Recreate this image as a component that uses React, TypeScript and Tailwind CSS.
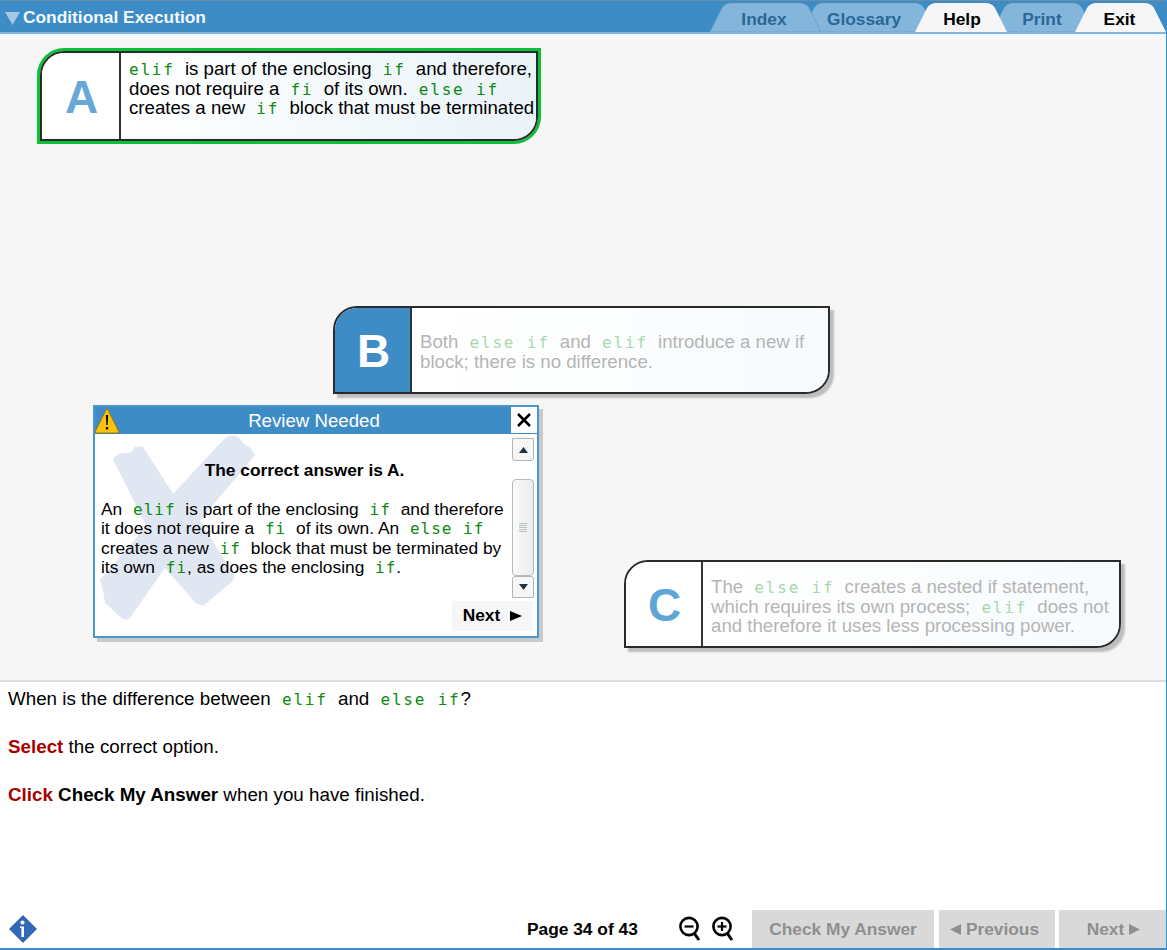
import type { ReactNode } from "react";

const TABS = [
	{ label: "Index", width: 111, left: 0, active: false, z: "z-10", pad: "pr-[3px]" },
	{ label: "Glossary", width: 134, left: -19, active: false, z: "z-0", pad: "pr-[10px]" },
	{ label: "Help", width: 92, left: -21, active: true, z: "z-20", pad: "pl-[2px]" },
	{ label: "Print", width: 102, left: -15, active: false, z: "z-0", pad: "pr-[2px]" },
	{ label: "Exit", width: 91, left: -19, active: true, z: "z-20", pad: "pr-[2px]" },
];

// flush: starts a line, tight: punctuation follows straight after, small: dialog text
function Code({
	children,
	faded,
	flush,
	tight,
	small,
}: {
	children: ReactNode;
	faded?: boolean;
	flush?: boolean;
	tight?: boolean;
	small?: boolean;
}) {
	return (
		<code
			className={`font-['DejaVu_Sans_Mono',monospace] text-[16px] leading-none ${
				small ? "tracking-[1px]" : "tracking-[1.8px]"
			} ${flush ? "ml-0" : "ml-[6px]"} ${tight ? "mr-0" : "mr-[5px]"} ${
				faded ? "text-[#a9d8ad]" : "text-[#0d8a12]"
			}`}
		>
			{children}
		</code>
	);
}

function Tab({ label, width, left, active, z, pad }: (typeof TABS)[number]) {
	const w = width;
	return (
		<div
			className={`relative flex h-[30px] items-center justify-center pt-[6px] ${z} ${pad}`}
			style={{ width: w, marginLeft: left }}
		>
			<svg className="absolute inset-0" width={w} height={30} viewBox={`0 0 ${w} 30`}>
				<path
					d={`M0 30 L12 6 Q15 1 22 1 L${w - 22} 1 Q${w - 15} 1 ${w - 12} 6 L${w} 30 Z`}
					fill={active ? "#f6f6f6" : "#84b6db"}
					stroke={active ? "none" : "#5c9ccd"}
					strokeWidth="0.6"
				/>
			</svg>
			<span
				className={`relative text-[17.33px] font-bold ${active ? "text-black" : "text-[#2b6797]"}`}
			>
				{label}
			</span>
		</div>
	);
}

function OptionCard({
	letter,
	className,
	letterClass,
	bodyClass,
	children,
}: {
	letter: string;
	className: string;
	letterClass: string;
	bodyClass: string;
	children: ReactNode;
}) {
	return (
		<div
			className={`absolute flex overflow-hidden rounded-tl-[24px] rounded-br-[24px] border-2 border-[#2a2a2a] ${className}`}
		>
			<div
				className={`flex shrink-0 items-center justify-center border-r-2 border-[#333] pt-[2px] pl-[2px] text-[46px] font-bold ${letterClass}`}
			>
				{letter}
			</div>
			<div className={`flex-1 pl-2 text-[18.67px] leading-[19.6px] whitespace-nowrap ${bodyClass}`}>
				{children}
			</div>
		</div>
	);
}

function ReviewDialog() {
	return (
		<div className="absolute top-[371px] left-[93px] flex h-[233px] w-[446px] flex-col border-2 border-[#4d96cd] bg-white shadow-[4px_4px_0_#c9c9c9]">
			<div className="relative flex h-[27px] shrink-0 items-center justify-center bg-[#3d8cc6] pr-[4px] text-[18.67px] text-white">
				Review Needed
				<svg className="absolute top-[-1px] left-[-1px]" width="26" height="28" viewBox="0 0 26 28">
					<path d="M13 2 L25 26 Q25 27 24 27 L2 27 Q1 27 1 26 Z" fill="#fbc20e" stroke="#8a6a00" strokeWidth="0.8" />
					<path d="M11.8 9 H14.2 L13.7 19 H12.3 Z M11.8 21 H14.2 V23.5 H11.8 Z" fill="#111" />
				</svg>
				<div className="absolute top-0 right-0 flex h-[26px] w-[26px] items-center justify-center bg-white">
					<svg width="16" height="16" viewBox="0 0 16 16">
						<path d="M2 2 L14 14 M14 2 L2 14" stroke="#000" strokeWidth="2.6" />
					</svg>
				</div>
			</div>
			<div className="relative flex-1">
				<svg className="absolute top-[-34px] left-[-10px]" width="173" height="223" viewBox="0 0 520 670">
					<path
						d="M85 180 Q90 165 110 160 L140 158 L148 142 L172 138 L265 282 L420 115 Q440 100 462 112 L478 132 L495 142 L512 165 L345 362 L450 530 L440 548 L355 618 L335 612 L240 505 L135 655 Q125 665 110 655 L60 610 L55 575 L45 540 L185 380 Z"
						fill="#e1e6f3"
					/>
				</svg>
				<div className="relative flex h-full">
					<div className="w-[416px] pt-[27px] pl-[6px] text-[17.33px] leading-[19.6px] whitespace-nowrap text-black">
						<p className="pr-[3px] text-center font-bold">The correct answer is A.</p>
						<p className="mt-[19px]">
							An <Code small>elif</Code> is part of the enclosing <Code small>if</Code> and therefore
							<br />
							it does not require a <Code small>fi</Code> of its own. An <Code small>else if</Code>
							<br />
							creates a new <Code small>if</Code> block that must be terminated by
							<br />
							its own <Code small tight>fi</Code>, as does the enclosing <Code small tight>if</Code>.
						</p>
					</div>
					<Scrollbar />
				</div>
				<div className="absolute right-[4px] bottom-[5px] flex h-[30px] w-[81px] items-center justify-center gap-[10px] bg-[#f6f6f6] text-[17.33px] font-bold text-black">
					Next
					<svg width="12" height="12" viewBox="0 0 12 12">
						<path d="M0 1 L12 6 L0 11 Z" fill="#000" />
					</svg>
				</div>
			</div>
		</div>
	);
}

function Scrollbar() {
	return (
		<div className="mt-[4px] ml-[1px] flex h-[160px] w-[22px] flex-col">
			<div className="flex h-[23px] items-center justify-center rounded-b-[3px] border border-[#b5b5b5] bg-[#f6f6f6]">
				<svg width="9" height="6" viewBox="0 0 9 6">
					<path d="M4.5 0 L9 6 H0 Z" fill="#1f3347" />
				</svg>
			</div>
			<div className="mt-[18px] flex h-[97px] items-center justify-center rounded-[4px] border border-[#b9b9b9] bg-gradient-to-r from-[#fafafa] to-[#ececec]">
				<div className="flex w-[8px] flex-col gap-[1px]">
					<div className="h-px bg-[#b5c3c3]" />
					<div className="h-px bg-[#b5c3c3]" />
					<div className="h-px bg-[#b5c3c3]" />
					<div className="h-px bg-[#b5c3c3]" />
					<div className="h-px bg-[#b5c3c3]" />
				</div>
			</div>
			<div className="mt-auto flex h-[22px] items-center justify-center rounded-t-[3px] border border-[#b5b5b5] bg-[#f6f6f6]">
				<svg width="9" height="6" viewBox="0 0 9 6">
					<path d="M0 0 H9 L4.5 6 Z" fill="#1f3347" />
				</svg>
			</div>
		</div>
	);
}

function ZoomIcon({ plus }: { plus?: boolean }) {
	return (
		<svg width="24" height="26" viewBox="0 0 24 26">
			<circle cx="11" cy="10.5" r="8.6" fill="none" stroke="#000" strokeWidth="2.6" />
			<path d="M16 17 L21 24" stroke="#000" strokeWidth="3" />
			<path d="M6.5 10.5 H15.5" stroke="#000" strokeWidth="2.2" />
			{plus && <path d="M11 6 V15" stroke="#000" strokeWidth="2.2" />}
		</svg>
	);
}

export default function App() {
	return (
		<div className="flex h-[950px] w-[1167px] flex-col overflow-hidden border-r border-b-2 border-[#3d8cc6] bg-white font-['Liberation_Sans',Arial,sans-serif] text-[18.8px] text-black">
			<header className="flex h-[34px] shrink-0 border-t border-b-2 border-t-[#6a8ea8] border-b-[#7db3dc] bg-[#3d8cc6]">
				<div className="flex flex-1 items-center gap-[3px] pt-[3px] pl-[5px] text-[17.33px] font-bold text-[#f4f8fb]">
					<svg width="15" height="13" viewBox="0 0 15 13">
						<path d="M0 0 H15 L7.5 13 Z" fill="#a3c9e6" />
					</svg>
					Conditional Execution
				</div>
				<nav className="mt-[1px] flex h-[30px] items-start">
					{TABS.map((t) => (
						<Tab key={t.label} {...t} />
					))}
				</nav>
			</header>

			<main className="relative h-[648px] shrink-0 border-b-2 border-[#dcdcdc] bg-[#f6f6f6]">
				<OptionCard
					letter="A"
					className="top-[17px] left-[40px] h-[90px] w-[498px] shadow-[0_0_0_3px_#0cc13a]"
					letterClass="w-[79px] bg-white text-[#68a8d6]"
					bodyClass="bg-gradient-to-r from-white to-[#eaf3f8] pt-[6px] text-black"
				>
					<Code flush>elif</Code> is part of the enclosing <Code>if</Code> and therefore,
					<br />
					does not require a <Code>fi</Code> of its own. <Code>else if</Code>
					<br />
					creates a new <Code>if</Code> block that must be terminated
				</OptionCard>
				<OptionCard
					letter="B"
					className="top-[272px] left-[333px] h-[88px] w-[497px] shadow-[4px_4px_2px_#bdbdbd]"
					letterClass="w-[77px] bg-[#3d8cc6] text-white"
					bodyClass="bg-gradient-to-r from-white to-[#f7fbfd] pt-[24px] text-[#b5b5b5]"
				>
					Both <Code faded>else if</Code> and <Code faded>elif</Code> introduce a new if
					<br />
					block; there is no difference.
				</OptionCard>
				<OptionCard
					letter="C"
					className="top-[526px] left-[624px] h-[88px] w-[497px] shadow-[4px_4px_2px_#bdbdbd]"
					letterClass="w-[77px] bg-white text-[#5ea6d6]"
					bodyClass="bg-gradient-to-r from-white to-[#f7fbfd] pt-[15px] text-[#b5b5b5]"
				>
					The <Code faded>else if</Code> creates a nested if statement,
					<br />
					which requires its own process; <Code faded>elif</Code> does not
					<br />
					and therefore it uses less processing power.
				</OptionCard>
				<ReviewDialog />
			</main>

			<section className="flex-1 pt-[5px] pl-[8px] leading-[24px]">
				<p>
					When is the difference between <Code>elif</Code> and <Code tight>else if</Code>?
				</p>
				<p className="mt-[24px]">
					<b className="text-[#a80000]">Select</b> the correct option.
				</p>
				<p className="mt-[24px]">
					<b className="text-[#a80000]">Click</b> <b>Check My Answer</b> when you have finished.
				</p>
			</section>

			<footer className="flex h-[38px] shrink-0 items-center pl-[9px] text-[17.33px] font-bold">
				<svg width="28" height="28" viewBox="0 0 28 28">
					<path d="M14 0 L28 14 L14 28 L0 14 Z" fill="#3267b7" />
					<circle cx="13.5" cy="7.5" r="2" fill="#fff" />
					<path d="M11 11.5 H15 V22 H12.4 V13 H11 Z" fill="#fff" />
				</svg>
				<span className="ml-[490px] w-[151px] pt-[1px]">Page 34 of 43</span>
				<ZoomIcon />
				<span className="w-[9px]" />
				<ZoomIcon plus />
				<div className="ml-[17px] flex h-full w-[182px] items-center justify-center bg-[#d9d9d9] pt-[1px] text-[#8f8f8f]">
					Check My Answer
				</div>
				<div className="ml-[5px] flex h-full w-[116px] items-center justify-center gap-[5px] bg-[#d9d9d9] pt-[1px] pr-[5px] text-[#8f8f8f]">
					<svg width="11" height="11" viewBox="0 0 11 11">
						<path d="M11 0 V11 L0 5.5 Z" fill="#8f8f8f" />
					</svg>
					Previous
				</div>
				<div className="ml-[4px] flex h-full flex-1 items-center justify-center gap-[5px] bg-[#d9d9d9] pt-[1px] pl-[2px] text-[#8f8f8f]">
					Next
					<svg width="11" height="11" viewBox="0 0 11 11">
						<path d="M0 0 V11 L11 5.5 Z" fill="#8f8f8f" />
					</svg>
				</div>
			</footer>
		</div>
	);
}
